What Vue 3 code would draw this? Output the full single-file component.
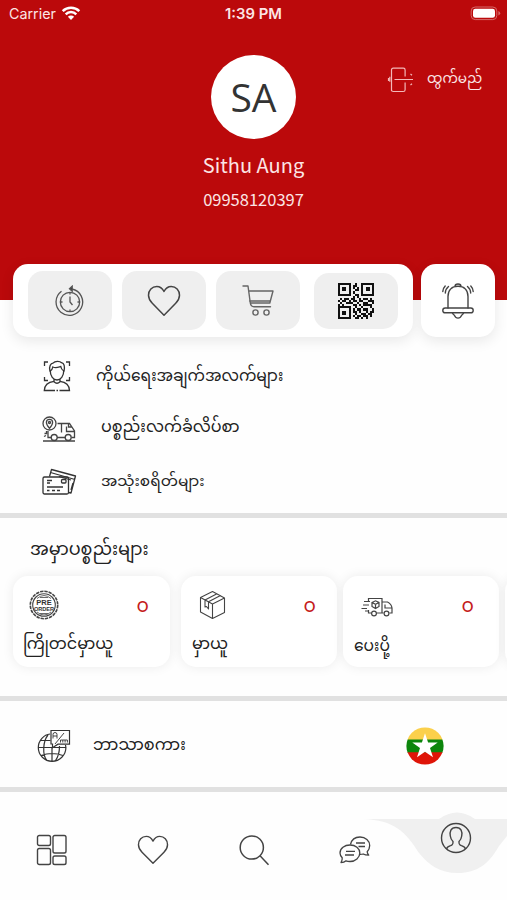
<template>
  <div class="screen">
    <header class="header">
      <div class="status">
        <div class="carrier">
          <span>Carrier</span>
          <svg width="20" height="15" viewBox="0 0 20 15" fill="none" stroke="#fff">
            <path d="M1.7 5.2a11.8 11.8 0 0 1 16.6 0M4.7 8.3a7.5 7.5 0 0 1 10.6 0" stroke-width="2.5" />
            <path d="M10 14 6.9 10.8a4.4 4.4 0 0 1 6.2 0z" fill="#fff" stroke="none" />
          </svg>
        </div>
        <span class="time">1:39 PM</span>
        <svg class="battery" width="31" height="15" viewBox="0 0 31 15">
          <rect x="1.2" y="1" width="25.6" height="12.6" rx="4" fill="none" stroke="#d56a6a" />
          <rect x="3" y="2.8" width="22" height="9" rx="2.4" fill="#fff" />
          <path d="M28.4 5v4.6q1.8-.8 1.8-2.3T28.4 5z" fill="#d56a6a" />
        </svg>
      </div>
      <div class="profile">
        <div class="avatar">SA</div>
        <div class="name">Sithu Aung</div>
        <div class="phone">09958120397</div>
      </div>
      <div class="logout">
        <svg width="27" height="26" viewBox="0 0 27 26" fill="none" stroke="#f3b9b9" stroke-width="1.2">
          <path d="M4.5 24V2.500M4.500 3q0-1.800 1.800-1.800h10q1.800 0 1.800 1.800v6.500M4.500 23q0 1.500 1.800 1.500h10q1.800 0 1.800-1.800V15.500M7.500 12.500H26M1.500 11v3M2.800 9.800v5M23.500 7l1.500 1.200M23.500 18l1.500-1.200" />
        </svg>
        <span>ထွက်မည်</span>
      </div>
    </header>

    <div class="quick">
      <div class="quick-main">
        <button class="tile">
          <svg width="30" height="32" viewBox="0 0 30 32" fill="none" stroke="#555" stroke-width="1.3">
            <path d="M17 4a13.300 13.300 0 1 1-10.500 2.300" />
            <circle cx="15" cy="17" r="9.700" />
            <path d="M15 11.500V17l2.500 3M15 8v1.500M15 24.500V26M6 17h1.500M22.500 17H24" />
            <path d="M14.500 3.800 17.200 1.200v5z" fill="#333" />
          </svg>
        </button>
        <button class="tile">
          <svg width="34" height="32" viewBox="0 0 34 32" fill="none" stroke="#444" stroke-width="1.5" stroke-linejoin="round">
            <path d="M17 6.500C15 2.800 12.500 1.500 9.800 1.500 5 1.500 1.500 5.300 1.500 10.300c0 3 1.300 5.400 3.800 8L17 30.200l11.700-11.900c2.500-2.600 3.800-5 3.800-8 0-5-3.500-8.800-8.300-8.800-2.700 0-5.200 1.300-7.200 5z" />
          </svg>
        </button>
        <button class="tile">
          <svg width="34" height="33" viewBox="0 0 34 33" fill="none" stroke="#666" stroke-width="1.4" stroke-linejoin="round" stroke-linecap="round">
            <path d="M2 2h5l2.300 17q.6 3.700 3.700 3.700h16.500M8 7h24l-3.200 12H9.400M8.600 17h20" />
            <circle cx="14.500" cy="28.500" r="2.600" />
            <circle cx="25.500" cy="28.500" r="2.600" />
          </svg>
        </button>
        <button class="tile tile-qr">
          <svg width="36" height="36" viewBox="0 0 17 17" shape-rendering="crispEdges">
            <template v-for="(row, y) in qr" :key="y">
              <template v-for="(cell, x) in row" :key="x">
                <rect v-if="cell === '#'" :x="x" :y="y" width="1" height="1" fill="#111" />
              </template>
            </template>
          </svg>
        </button>
      </div>
      <button class="bell">
        <svg width="34" height="38" viewBox="0 0 34 38" fill="none" stroke="#444" stroke-width="1.4" stroke-linecap="round">
          <path d="M14 4.500q0-2.500 3-2.500t3 2.500M7 26V14.500C7 8 11 4.300 17 4.300S27 8 27 14.500V26" />
          <rect x="1.800" y="26" width="30.400" height="4.800" rx="2.400" />
          <path d="M11.500 31c.5 1.500 1.500 1.700 2 2.500 1.500 3.500 5.500 3.500 7 0 .5-.8 1.500-1 2-2.500" />
          <path d="M7.500 4.500Q4.500 7 4.300 11M4.200 4Q1.800 6.500 1.800 9.500M26.500 4.500q3 2.500 3.200 6.500M29.800 4q2.400 2.500 2.400 5.500" />
        </svg>
      </button>
    </div>

    <ul class="menu">
      <li>
        <svg width="28" height="32" viewBox="0 0 28 32" fill="none" stroke="#333" stroke-width="1.3">
          <path d="M1.500 6V2H5M23 2h3.500v4M1.500 17v3.500H5M23 20.500h3.500V17" />
          <path d="M7 11.500C5.500 6 8 3.500 10 3.200 12 .8 17 1 18.500 2.700c3 .8 3.500 4 2.500 8.800M7.300 11c1.500-1 2.200-2.200 2.500-4 3.500 1.500 6 0 8-.5.3 2 1.200 3.500 2.900 4.500M7.300 10.500C7 16 10.500 20 14 20s7-4 6.700-9.500M11 19v2.700q3 3 6 0V19" />
          <path d="M11 21.300c-6 .7-9.500 3-9.700 9.200H12m1.500 0h1.500m1.500 0h10c-.2-6.200-3.500-8.500-9.500-9.200" />
        </svg>
        <span class="t1">ကိုယ်ရေးအချက်အလက်များ</span>
      </li>
      <li>
        <svg width="34" height="26" viewBox="0 0 34 26" fill="none" stroke="#444" stroke-width="1.3">
          <circle cx="7.500" cy="7.500" r="6.500" />
          <path d="M7.500 12.300C5 9.500 4.400 8 4.400 6.500a3.100 3.100 0 0 1 6.200 0c0 1.500-.6 3-3.100 5.800z" />
          <circle cx="7.500" cy="6.500" r="1" />
          <path d="M15.500 7.500h7M19.500 7.500v9M22.500 7.500h5l5 7.500v6.500h-3M24.500 10.500v5h8M26.500 7.500v3.500h3M6 15v6.500h3.500M15 21.500h8.500M4.500 15v2.500H2.500M4 19.500 2 20.500M1 25h32" />
          <circle cx="12.200" cy="21.500" r="3" />
          <circle cx="26.200" cy="21.500" r="3" />
        </svg>
        <span class="t2">ပစ္စည်းလက်ခံလိပ်စာ</span>
      </li>
      <li>
        <svg width="35" height="27" viewBox="0 0 35 27" fill="none" stroke="#333" stroke-width="1.3" stroke-linejoin="round">
          <rect x="1" y="9" width="25.500" height="17" rx="1.500" />
          <path d="M7.500 8.500 9.500 1.500 33.500 8 29 25l-2.500-.5M8.500 4.500 33 11.500M17 8.500l12 3.500M5 12.500h5M5 15h3M5 19h16M5 22.500h2.500M10 22.500h3M15 22.500h3M31 15l-2 7" />
          <rect x="19.500" y="11.500" width="4.500" height="3.500" rx="1" />
        </svg>
        <span class="t3">အသုံးစရိတ်များ</span>
      </li>
    </ul>

    <section class="orders">
      <h2>အမှာပစ္စည်းများ</h2>
      <div class="cards">
        <article class="card">
          <div class="card-top">
            <svg width="30" height="30" viewBox="0 0 30 30" fill="none" stroke="#444">
              <circle cx="15" cy="15" r="13.700" stroke-width="1.6" stroke-dasharray="3.4 .9" />
              <circle cx="15" cy="15" r="11.300" stroke-width="1.1" />
              <path d="M8 8.500q7-6 14 0M8 22q7 6 14 0M11 7.500h8M11 23.500h8" stroke-width=".8" />
              <text x="15" y="14.500" class="stamp">PRE</text>
              <text x="15" y="21" class="stamp stamp-sm">ORDER</text>
            </svg>
            <span class="count">၀</span>
          </div>
          <p class="o1">ကြိုတင်မှာယူ</p>
        </article>
        <article class="card">
          <div class="card-top">
            <svg class="box" width="27" height="30" viewBox="0 0 27 30" fill="none" stroke="#444" stroke-width="1.1" stroke-linejoin="round">
              <path d="M1.500 7.500 13.500 1.500l12 6.500v14.500L13.500 28.500l-12-6.500zM1.500 7.500l12 6.500 12-6M13.500 14v14.500M6 10 18 3.700M9.500 11.800l12-6.300M6 10v7l1.500-.5L9.500 19v-7.200" />
            </svg>
            <span class="count">၀</span>
          </div>
          <p>မှာယူ</p>
        </article>
        <article class="card">
          <div class="card-top">
            <svg class="van" width="32" height="20" viewBox="0 0 32 20" fill="none" stroke="#444" stroke-width="1.2">
              <path d="M7.500 4.500V1.500h13.500v14.500h-5.500M10.500 16h-3v-3M21 5h5.500q4 2 4.500 6v5h-2.500M22.500 16H21M24 7.500V11h7M3 4.500h6M2 8h6M.5 11.500H6M4 14h3" />
              <circle cx="13" cy="16.500" r="2.400" />
              <circle cx="25.500" cy="16.500" r="2.400" />
              <path d="m11 5.500 3.500-1.700L18 5.500v4l-3.500 2-3.500-2zm0 0 3.500 1.800L18 5.500m-3.500 1.800v4" />
            </svg>
            <span class="count">၀</span>
          </div>
          <p class="o3">ပေးပို့</p>
        </article>
        <article class="card"></article>
      </div>
    </section>

    <section class="language">
      <svg width="34" height="34" viewBox="0 0 34 34" fill="none" stroke="#333" stroke-width="1.2">
        <path d="M13 5C7 5.500 1.300 11.500 1.300 18.500A13.800 13.800 0 0 0 28.900 18.500L28.500 16M11 6c-5 6-6 20-1 25.500M1.500 18.500h27M3.500 11.500h10M4 26.500q11-4 22 0M15 18.500v13.500M22.500 17c0 6-.5 10-4 14.500" />
        <path d="M14 1.500h18.500v13.700H21l-5.500 3.500V15H14z" fill="#fff" />
        <path d="m18 15 9-11M16 9.500V5.500q0-2 2-2t2 2v4m-4-2.500h4M23.500 13.500V11h2.300v2.500m0-2.500h2.300v2.500m0-2.500h2.300v2.500" stroke-width=".9" />
      </svg>
      <span class="t4">ဘာသာစကား</span>
      <svg class="flag" width="38" height="38" viewBox="0 0 38 38">
        <clipPath id="round"><circle cx="19" cy="19" r="18.600" /></clipPath>
        <g clip-path="url(#round)">
          <path fill="#fbd04b" d="M0 0h38v13H0z" />
          <path fill="#0c860c" d="M0 12.600h38V26H0z" />
          <path fill="#df1508" d="M0 25.200h38V38H0z" />
        </g>
        <path fill="#fff" d="m19 6.300 3.100 9.100h9.600L24 21l3 9.300-8-5.600-8 5.600L14 21l-7.700-5.600h9.600z" />
      </svg>
    </section>

    <nav class="nav">
      <svg class="wave" width="144" height="62" viewBox="0 0 144 62">
        <path fill="#f0f0f0" d="M0 7h76Q94-6 112 7h32v17l-8 10C126 52 114 61 95 61 76 61 66 53 56 41 43 20 31 8 0 7z" />
      </svg>
      <a href="#">
        <svg width="32" height="32" viewBox="0 0 32 32" fill="none" stroke="#444" stroke-width="1.4">
          <rect x="1.500" y="1.500" width="13" height="10" rx="1.800" />
          <rect x="17" y="1.500" width="13" height="17.500" rx="1.800" />
          <rect x="1.500" y="14.500" width="13" height="16" rx="1.800" />
          <rect x="17" y="22" width="13" height="8.500" rx="1.800" />
        </svg>
      </a>
      <a href="#">
        <svg width="32" height="30" viewBox="0 0 34 32" fill="none" stroke="#444" stroke-width="1.5" stroke-linejoin="round">
          <path d="M17 6.500C15 2.800 12.500 1.500 9.800 1.500 5 1.500 1.500 5.300 1.500 10.300c0 3 1.300 5.400 3.800 8L17 30.200l11.700-11.900c2.500-2.600 3.800-5 3.800-8 0-5-3.500-8.800-8.300-8.800-2.700 0-5.200 1.300-7.200 5z" />
        </svg>
      </a>
      <a href="#">
        <svg width="32" height="32" viewBox="0 0 32 32" fill="none" stroke="#444" stroke-width="1.5">
          <circle cx="13.800" cy="13.500" r="11.600" />
          <path d="m22 21.700 8.500 9" />
        </svg>
      </a>
      <a href="#">
        <svg width="32" height="30" viewBox="0 0 32 30" fill="none" stroke="#444" stroke-width="1.3" stroke-linejoin="round">
          <path d="M11.500 9.500C12.500 5 16 2 21 2c5.500 0 9.700 3.700 9.700 8.500 0 2.800-1 4.500-2.500 6.200 0 1.300.7 2.300 1.500 3.500-2.200 0-4-.3-5.500-1.200-1.200.4-2.300.5-3.500.4" />
          <path d="M3.200 22.800C1.800 21.200 1 20 1 18 1 13.500 5.500 10 11 10s9.800 3.500 9.800 8-4.300 8.500-9.800 8.500c-1.500 0-2.800-.2-4-.7-1.300 1.200-3 1.700-5 1.700.9-1.300 1.400-2.700 1.200-4.700z" />
          <path d="M17 8h9M19.500 11.500H26M7 16.300h9M6 20h9" />
        </svg>
      </a>
      <a href="#" class="active">
        <svg width="32" height="32" viewBox="0 0 32 32" fill="none" stroke="#444" stroke-width="1.4">
          <circle cx="16" cy="16" r="14.500" />
          <path d="M6.500 27c.5-2 2-2.700 4-3.300 2-.7 2.700-1.200 2.500-4.200-2.200-2-2.500-4-2.700-5.500-.8-4.500.5-8.500 5.700-8.500s6.500 4 5.700 8.500c-.2 1.500-.5 3.500-2.700 5.500-.2 3 .5 3.500 2.500 4.200 2 .6 3.500 1.300 4 3.300" />
        </svg>
      </a>
    </nav>
  </div>
</template>

<script setup>
const qr = [
  "######..#..######",
  "#....#.##..#....#",
  "#.##.#.#.#.#.##.#",
  "#.##.#..##.#.##.#",
  "#....#.#...#....#",
  "######..##.######",
  ".......#.#.......",
  ".#.##.##..#.##.#.",
  "#.##.#.##.##..###",
  ".#..###..#..##..#",
  "#.#....##.#.####.",
  "######..#..#...#.",
  "#....#.#.##.##..#",
  "#.##.#.##.#..#.##",
  "#.##.#..#..##.##.",
  "#....#.#.##.##.#.",
  "######..##.#.#...",
];
</script>

<style>
body {
  margin: 0;
}
</style>

<style scoped>
.screen {
  width: 507px;
  height: 900px;
  display: flex;
  flex-direction: column;
  overflow: hidden;
  background: #fefefe;
  color: #222;
  font-family: "Noto Sans", "Noto Sans Myanmar", "Padauk", sans-serif;
}
.header {
  position: relative;
  flex: none;
  height: 300px;
  background: #bb090b;
  color: #fce5e5;
}
.status {
  display: grid;
  grid-template-columns: 1fr auto 1fr;
  align-items: center;
  height: 27px;
  padding: 0 6px 0 9px;
  font-family: Inter, sans-serif;
  font-size: 14.3px;
}
.carrier {
  display: flex;
  align-items: center;
  gap: 5px;
}
.time {
  margin-right: 3px;
  font-size: 14.8px;
  font-weight: 600;
}
.battery {
  justify-self: end;
}
.profile {
  display: flex;
  flex-direction: column;
  align-items: center;
  padding-top: 28px;
}
.avatar {
  width: 85px;
  height: 84px;
  border-radius: 50%;
  background: #fff;
  color: #333;
  font: 39px/84px "Open Sans", sans-serif;
  text-align: center;
}
.name {
  margin-top: 10px;
  font: 20px/32px "Noto Sans CJK SC", sans-serif;
}
.phone {
  margin-top: 6px;
  font: 16.5px/24px "Noto Sans CJK SC", sans-serif;
}
.logout {
  position: absolute;
  top: 67px;
  left: 387px;
  display: flex;
  align-items: center;
  gap: 13px;
  height: 26px;
  font-size: 13.7px;
  white-space: nowrap;
}
.quick {
  position: relative;
  flex: none;
  display: flex;
  gap: 8px;
  height: 73px;
  margin: -36px 12px 0 13px;
}
button {
  padding: 0;
  border: 0;
}
svg {
  flex: none;
  display: block;
}
.quick-main {
  display: flex;
  align-items: center;
  gap: 10px;
  width: 400px;
  padding: 0 15px;
  box-sizing: border-box;
  border-radius: 15px;
  background: #fff;
  box-shadow: 0 4px 14px rgba(0, 0, 0, 0.09);
}
.tile {
  display: flex;
  align-items: center;
  justify-content: center;
  width: 84px;
  height: 59px;
  border-radius: 15px;
  background: #efefef;
}
.tile-qr {
  height: 56px;
  margin-left: 4px;
}
.bell {
  display: flex;
  align-items: center;
  justify-content: center;
  width: 74px;
  border-radius: 15px;
  background: #fff;
  box-shadow: 0 4px 14px rgba(0, 0, 0, 0.09);
}
.menu {
  flex: none;
  height: 181px;
  box-sizing: border-box;
  margin: 0;
  padding: 12px 0 0 42px;
  list-style: none;
  border-bottom: 5px solid #e1e1e1;
}
.menu li {
  display: flex;
  align-items: center;
  height: 53px;
  gap: 25px;
  font-size: 16px;
  white-space: nowrap;
}
.menu li:first-child {
  padding-left: 1px;
}
.menu .t1 {
  padding-top: 2px;
  font-size: 15.5px;
}
.menu .t3 {
  margin-left: -1px;
  padding-top: 2px;
  font-size: 15.3px;
}
.orders {
  flex: none;
  height: 183px;
  box-sizing: border-box;
  border-bottom: 5px solid #e1e1e1;
}
.orders h2 {
  height: 58px;
  margin: 0;
  padding-left: 30px;
  font-size: 17.6px;
  font-weight: 400;
  line-height: 60px;
  white-space: nowrap;
}
.cards {
  display: flex;
  gap: 6px;
  height: 91px;
  padding-left: 13px;
}
.card {
  flex: none;
  width: 156px;
  box-sizing: border-box;
  padding: 10px 21px 0 11px;
  border-radius: 15px;
  background: #fff;
  box-shadow: 0 0 12px rgba(0, 0, 0, 0.08);
}
.card:first-child {
  width: 157px;
  margin-right: 5px;
}
.card:nth-child(3) {
  padding-right: 25px;
}
.card-top {
  display: flex;
  align-items: center;
  justify-content: space-between;
  height: 38px;
  padding-left: 5px;
}
.box {
  margin-left: 2px;
}
.van {
  margin: 3px 0 0 2px;
}
.card p {
  margin: 0;
  font-size: 16px;
  line-height: 38px;
  white-space: nowrap;
}
.card .o1 {
  margin-left: -1px;
}
.card .o3 {
  padding-top: 2px;
  font-size: 15.5px;
}
.count {
  color: #c51c20;
  font-size: 19px;
  line-height: 38px;
}
.stamp {
  fill: #333;
  stroke: none;
  font: 700 7.5px "Liberation Sans", sans-serif;
  text-anchor: middle;
}
.stamp-sm {
  font-size: 5.6px;
}
.language {
  flex: none;
  display: flex;
  align-items: center;
  height: 91px;
  box-sizing: border-box;
  padding: 4px 63px 0 37px;
  border-bottom: 5px solid #e1e1e1;
  font-size: 16.1px;
}
.t4 {
  margin-left: 22px;
}
.flag {
  margin-left: auto;
}
.nav {
  position: relative;
  flex: 1;
  display: flex;
  align-items: center;
  justify-content: space-between;
  padding: 7px 35px 0 36px;
}
.nav a {
  position: relative;
}
.nav .active {
  margin-bottom: 24px;
}
.wave {
  position: absolute;
  top: 20px;
  right: 0;
}
</style>
